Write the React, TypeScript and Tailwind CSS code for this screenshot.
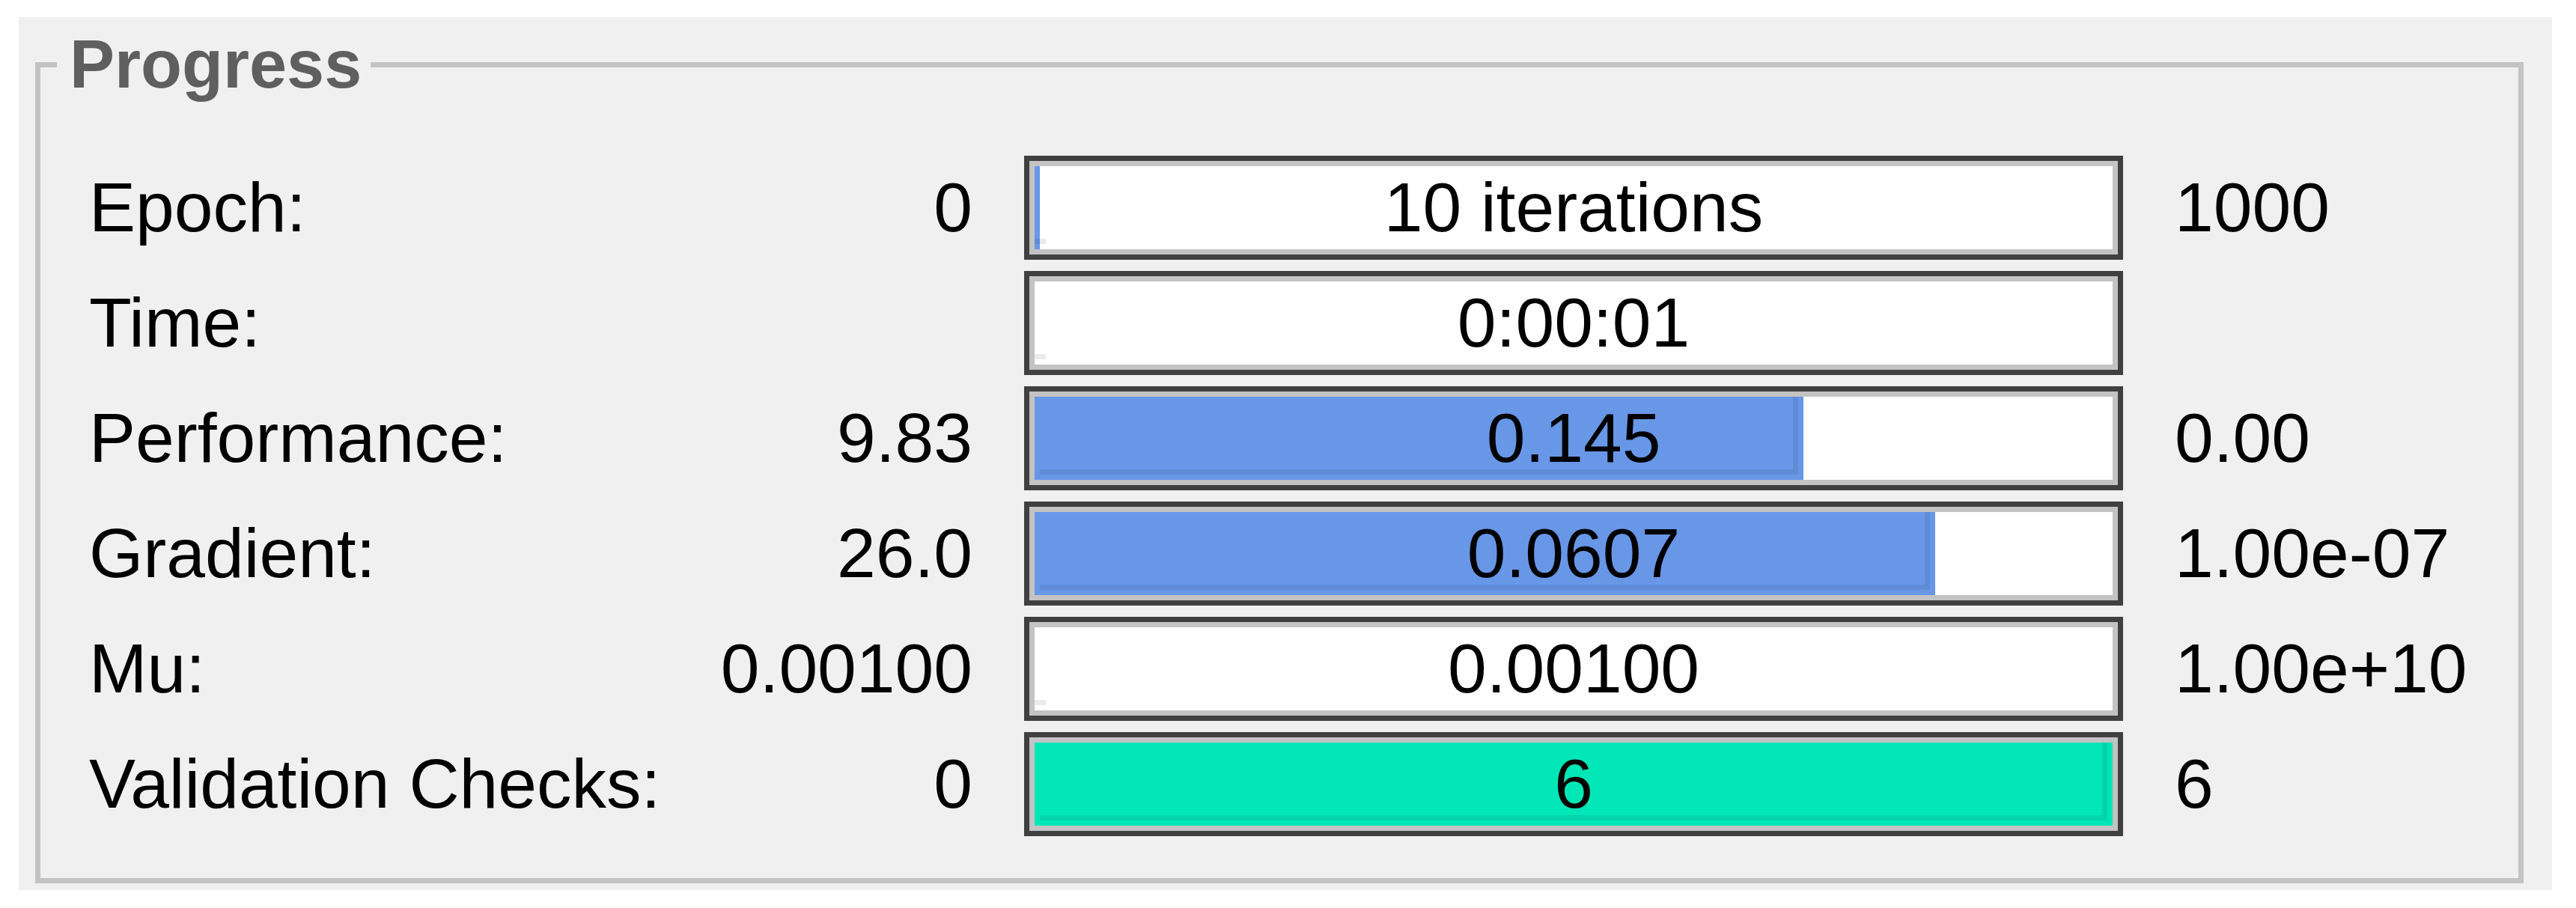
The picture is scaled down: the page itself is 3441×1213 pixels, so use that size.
import React from 'react';

type Row = {
  label: string;
  min: string;
  text: string;
  max: string;
  fill?: string; // width + colour classes of the progress chunk
  stripe?: boolean;
  mark?: boolean;
};

const rows: Row[] = [
  { label: 'Epoch:', min: '0', text: '10 iterations', max: '1000', fill: 'w-[7px] bg-[#6897e8]', mark: true },
  { label: 'Time:', min: '', text: '0:00:01', max: '', mark: true },
  { label: 'Performance:', min: '9.83', text: '0.145', max: '0.00', fill: 'w-[1027px] bg-[#6897e8]', stripe: true },
  { label: 'Gradient:', min: '26.0', text: '0.0607', max: '1.00e-07', fill: 'w-[1203px] bg-[#6897e8]', stripe: true },
  { label: 'Mu:', min: '0.00100', text: '0.00100', max: '1.00e+10', mark: true },
  { label: 'Validation Checks:', min: '0', text: '6', max: '6', fill: 'w-full bg-[#00e6b6]', stripe: true },
];

const ProgressBar: React.FC<{ row: Row }> = ({ row }) => (
  <div className="ml-[69px] w-[1468px] h-[139px] shrink-0 border-[7px] border-[#404040] bg-[#c3c3c3] p-[7px]">
    <div className="grid h-full w-full bg-white">
      {row.fill && (
        <div className={`col-start-1 row-start-1 h-full justify-self-start ${row.fill} ${row.stripe ? 'px-[7px] pb-[7px]' : ''}`}>
          {row.stripe && <div className="h-full border-r-[7px] border-b-[7px] border-black/[0.07]" />}
        </div>
      )}
      {row.mark && (
        <div className="col-start-1 row-start-1 self-end justify-self-start mb-[7px] w-[15px] h-[7px] bg-black/[0.08]" />
      )}
      <span className="col-start-1 row-start-1 self-center justify-self-center text-black">{row.text}</span>
    </div>
  </div>
);

const App: React.FC = () => {
  return (
    <div className="w-[3441px] h-[1213px] bg-white pt-[23px] pl-[25px] font-['Liberation_Sans',Arial,sans-serif]">
      <div className="w-[3384px] h-[1166px] bg-[#f0f0f0] pt-[18px] pl-[22px]">
        <fieldset className="w-[3324px] h-[1139px] border-[7px] border-[#c3c3c3] px-0 pb-0 pt-[77px]">
          <legend className="ml-[22px] pl-[17px] pr-[12px] text-[90px] leading-none font-bold text-[#5f5f5f]">
            Progress
          </legend>

          {/* Rows */}
          <div className="flex flex-col gap-[15px] pl-[65px] text-[93px] leading-none text-black">
            {rows.map((row) => (
              <div key={row.label} className="flex items-center h-[139px]">
                <div className="w-[1180px] shrink-0 flex justify-between">
                  <span>{row.label}</span>
                  <span>{row.min}</span>
                </div>
                <ProgressBar row={row} />
                <span className="ml-[69px]">{row.max}</span>
              </div>
            ))}
          </div>
        </fieldset>
      </div>
    </div>
  );
};

export default App;
